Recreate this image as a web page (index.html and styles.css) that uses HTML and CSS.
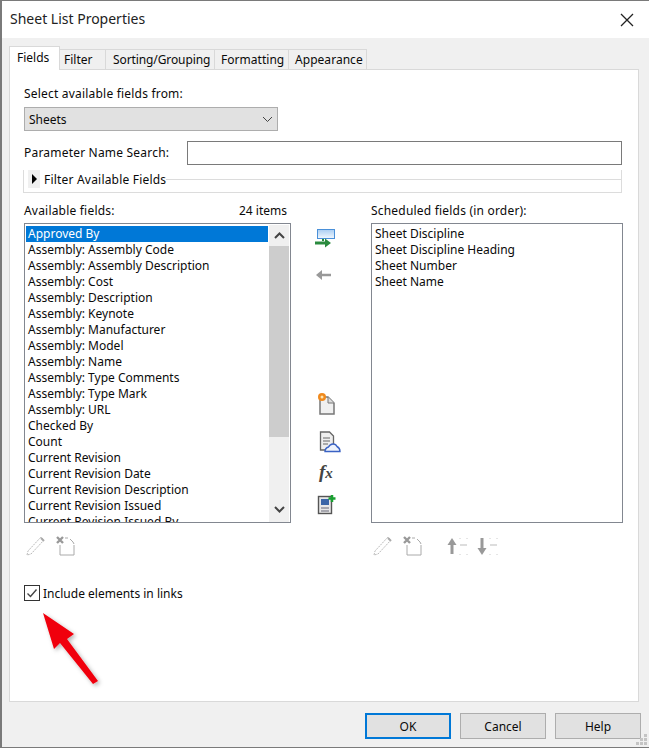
FILE: index.html
```html
<!DOCTYPE html>
<html lang="en">
<head>
<meta charset="utf-8">
<title>Sheet List Properties</title>
<link rel="stylesheet" href="styles.css">
</head>
<body>
<div class="window">
  <header class="titlebar">
    <span class="title">Sheet List Properties</span>
    <svg class="close" width="14" height="14" viewBox="0 0 14 14"><path d="M1 1l12 12M13 1L1 13" stroke="#222" stroke-width="1.3" fill="none"/></svg>
  </header>
  <div class="dialog">
    <nav class="tabs">
      <span class="tab active">Fields</span>
      <span class="tab tab-filter">Filter</span>
      <span class="tab tab-sort">Sorting/Grouping</span>
      <span class="tab tab-format">Formatting</span>
      <span class="tab tab-appear">Appearance</span>
    </nav>
    <main class="panel">
      <div class="label select-label">Select available fields from:</div>
      <div class="combo">
        <span>Sheets</span>
        <svg width="11" height="7" viewBox="0 0 11 7"><path d="M1 1l4.5 4.5L10 1" stroke="#444" fill="none"/></svg>
      </div>
      <div class="search-row">
        <span class="label">Parameter Name Search:</span>
        <div class="search-input"></div>
      </div>
      <div class="filter-group">
        <div class="filter-head">
          <span class="toggle"><svg width="7" height="10" viewBox="0 0 7 10"><path d="M1 0l5 5-5 5z" fill="#000"/></svg></span>
          <span class="label">Filter Available Fields</span>
          <span class="filter-line"></span>
        </div>
      </div>
      <div class="fields">
        <section class="col col-left">
          <div class="col-head"><span class="label">Available fields:</span><span>24 items</span></div>
          <div class="listbox">
            <div class="rows">
              <div class="row selected">Approved By</div>
              <div class="row">Assembly: Assembly Code</div>
              <div class="row">Assembly: Assembly Description</div>
              <div class="row">Assembly: Cost</div>
              <div class="row">Assembly: Description</div>
              <div class="row">Assembly: Keynote</div>
              <div class="row">Assembly: Manufacturer</div>
              <div class="row">Assembly: Model</div>
              <div class="row">Assembly: Name</div>
              <div class="row">Assembly: Type Comments</div>
              <div class="row">Assembly: Type Mark</div>
              <div class="row">Assembly: URL</div>
              <div class="row">Checked By</div>
              <div class="row">Count</div>
              <div class="row">Current Revision</div>
              <div class="row">Current Revision Date</div>
              <div class="row">Current Revision Description</div>
              <div class="row">Current Revision Issued</div>
              <div class="row">Current Revision Issued By</div>
            </div>
            <div class="scrollbar">
              <svg class="sb-arrow" width="11" height="7" viewBox="0 0 11 7"><path d="M1 6l4.5-4.5L10 6" stroke="#444" stroke-width="2" fill="none"/></svg>
              <div class="thumb"></div>
              <svg class="sb-arrow sb-down" width="11" height="7" viewBox="0 0 11 7"><path d="M1 1l4.5 4.5L10 1" stroke="#444" stroke-width="2" fill="none"/></svg>
            </div>
          </div>
          <div class="tools">
            <svg width="22" height="22" viewBox="0 0 22 22"><path d="M2 20l1-4L16 2l3 3L6 19z" fill="none" stroke="#bbb" stroke-dasharray="2 1"/><path d="M16 3l3 3" stroke="#aaa" stroke-width="2"/></svg>
            <svg width="22" height="22" viewBox="0 0 22 22"><path d="M10 3h3M15 4l3 3 1 2M19 10v10H5V10" fill="none" stroke="#aaa"/><path d="M2 2l6 6M8 2L2 8" stroke="#999" stroke-width="2.4"/></svg>
          </div>
        </section>
        <section class="mid">
          <svg class="mid-add" width="22" height="24" viewBox="0 0 22 24"><defs><linearGradient id="g" x1="0" y1="0" x2="0" y2="1"><stop offset="0" stop-color="#a9cdf2"/><stop offset="1" stop-color="#f2f8fe"/></linearGradient></defs><rect x="2.500" y="1.500" width="17" height="9" fill="url(#g)" stroke="#4a90d9"/><path d="M8 11v2" stroke="#2a8a3e" stroke-width="2"/><path d="M0 15h11" stroke="#2a8a3e" stroke-width="3"/><path d="M10 10.500l6 4.500-6 4.500z" fill="#2a8a3e"/></svg>
          <svg class="mid-remove" width="20" height="14" viewBox="0 0 20 14"><path d="M6 7h10" stroke="#999" stroke-width="2.500"/><path d="M7 2L1 7l6 5z" fill="#999"/></svg>
          <svg class="mid-new" width="20" height="24" viewBox="0 0 20 24"><path d="M3 5h8l6 6v11H3z" fill="#f0f0f0" stroke="#777" stroke-width="1.500"/><path d="M11 5v6h6" fill="#ddd" stroke="#777"/><circle cx="5" cy="5" r="4" fill="#f08a1e"/><circle cx="5" cy="5" r="1.500" fill="#ffe6b0"/></svg>
          <svg class="mid-cloud" width="22" height="22" viewBox="0 0 22 22"><path d="M1.500 1h9l4 4v14h-13z" fill="#eee" stroke="#666" stroke-width="1.300"/><path d="M4 7h7M4 10h7M4 13h5" stroke="#666"/><path d="M6 20.500c0-3 2-4 3.500-4.500 2-4 7-4 8.500-.500 2 1 3 3 3 5z" fill="#eef3fc" stroke="#3a62c4" stroke-width="1.400"/></svg>
          <span class="fx">f<i>x</i></span>
          <svg class="mid-calc" width="20" height="22" viewBox="0 0 20 22"><rect x="1.500" y="2.500" width="13" height="17" fill="#e8e8e8" stroke="#555" stroke-width="1.400"/><rect x="4" y="5" width="8" height="6" fill="#3c66a8"/><path d="M4 14h8M4 17h8" stroke="#667"/><path d="M15 1v7M11.500 4.500h7" stroke="#19a030" stroke-width="2.500"/></svg>
        </section>
        <section class="col col-right">
          <div class="col-head"><span class="label">Scheduled fields (in order):</span></div>
          <div class="listbox">
            <div class="rows">
              <div class="row">Sheet Discipline</div>
              <div class="row">Sheet Discipline Heading</div>
              <div class="row">Sheet Number</div>
              <div class="row">Sheet Name</div>
            </div>
          </div>
          <div class="tools">
            <svg width="22" height="22" viewBox="0 0 22 22"><path d="M2 20l1-4L16 2l3 3L6 19z" fill="none" stroke="#bbb" stroke-dasharray="2 1"/><path d="M16 3l3 3" stroke="#aaa" stroke-width="2"/></svg>
            <svg width="22" height="22" viewBox="0 0 22 22"><path d="M10 3h3M15 4l3 3 1 2M19 10v10H5V10" fill="none" stroke="#aaa"/><path d="M2 2l6 6M8 2L2 8" stroke="#999" stroke-width="2.400"/></svg>
            <svg class="tool-gap" width="22" height="22" viewBox="0 0 22 22"><path d="M6 19V9" stroke="#999" stroke-width="3"/><path d="M6 3L1.500 10h9z" fill="#999"/><path d="M14 10h7" stroke="#bbb"/><path d="M14 3v1M21 3v1M14 19v1M21 19v1" stroke="#ccc"/></svg>
            <svg width="22" height="22" viewBox="0 0 22 22"><path d="M6 3v11" stroke="#999" stroke-width="3"/><path d="M6 20L1.500 13h9z" fill="#999"/><path d="M14 10h7" stroke="#bbb"/><path d="M14 3v1M21 3v1M14 19v1M21 19v1" stroke="#ccc"/></svg>
          </div>
        </section>
      </div>
      <label class="include">
        <span class="checkbox"><svg width="14" height="14" viewBox="0 0 14 14"><path d="M2.500 7.500l3 3 6-7" stroke="#444" stroke-width="1.400" fill="none"/></svg></span>
        <span>Include elements in links</span>
      </label>
    </main>
    <footer class="buttons">
      <button class="btn default">OK</button>
      <button class="btn">Cancel</button>
      <button class="btn">Help</button>
    </footer>
  </div>
  <svg class="grip" width="12" height="12" viewBox="0 0 12 12"><path d="M8 0h3v3H8zM4 4h3v3H4zM8 4h3v3H8zM0 8h3v3H0zM4 8h3v3H4zM8 8h3v3H8z" fill="#c4c4c4"/></svg>
  <svg class="red-arrow" width="70" height="84" viewBox="0 0 70 84"><defs><filter id="s" x="-20%" y="-20%" width="150%" height="150%"><feDropShadow dx="2" dy="2" stdDeviation="2" flood-color="#000" flood-opacity=".3"/></filter></defs><path d="M6 3L37 24 30 29 61 71 56 74 23 33 17 39z" fill="#f0000f" filter="url(#s)"/></svg>
</div>
</body>
</html>
```
FILE: styles.css
```css
* { box-sizing: border-box; }
html, body { margin: 0; padding: 0; }
body {
  width: 649px;
  height: 748px;
  font-family: "Noto Sans", Tahoma, sans-serif;
  font-size: 12px;
  color: #0a0a0a;
  overflow: hidden;
}
.window {
  position: relative;
  width: 649px;
  height: 748px;
  background: #f0f0f0;
  border: 1px solid #7a7a7a;
  border-left-width: 2px;
  border-right: none;
  display: flex;
  flex-direction: column;
}
.titlebar {
  height: 37px;
  flex: none;
  background: #fff;
  display: flex;
  align-items: center;
  justify-content: space-between;
  padding: 0 15px 2px 8px;
}
.title { font-size: 14px; color: #222; }
.close { margin-top: 2px; }
.dialog {
  flex: 1;
  display: flex;
  flex-direction: column;
  padding: 8px 8px 0 7px;
  min-height: 0;
}
.tabs { display: flex; align-items: flex-end; height: 23px; flex: none; position: relative; z-index: 1; }
.tab {
  height: 20px;
  background: #f0f0f0;
  border: 1px solid #d9d9d9;
  border-left: none;
  border-bottom: none;
  display: flex;
  align-items: center;
  justify-content: flex-start;
  padding: 0 0 1px 6px;
  white-space: nowrap;
}
.tab.active {
  width: 51px;
  height: 24px;
  margin-bottom: -1px;
  background: #fff;
  border: 1px solid #d9d9d9;
  border-bottom: none;
  padding: 0 0 3px 7px;
}
.tab-filter { width: 46px; padding-left: 4px; }
.tab-sort { width: 109px; padding-left: 7px; letter-spacing: -.1px; }
.tab-format { width: 74px; letter-spacing: .03px; }
.tab-appear { width: 78px; letter-spacing: .04px; }
.panel {
  width: 630px;
  height: 633px;
  flex: none;
  background: #fff;
  border: 1px solid #d9d9d9;
  padding: 0 0 0 14px;
  display: flex;
  flex-direction: column;
}
.label { letter-spacing: .2px; }
.select-label { margin-top: 15px; line-height: 17px; }
.combo {
  width: 254px;
  height: 24px;
  margin-top: 5px;
  background: #e1e1e1;
  border: 1px solid #adadad;
  display: flex;
  align-items: center;
  justify-content: space-between;
  padding: 0 4px;
}
.search-row {
  display: flex;
  align-items: center;
  justify-content: space-between;
  width: 598px;
  margin-top: 10px;
}
.search-row .label { position: relative; top: -1px; }
.search-input { width: 435px; height: 24px; border: 1px solid #7a7a7a; background: #fff; }
.filter-group {
  width: 599px;
  height: 23px;
  margin-top: 5px;
  margin-left: -1px;
  border-left: 1px solid #dcdcdc;
  border-right: 1px solid #dcdcdc;
  border-bottom: 1px solid #dcdcdc;
}
.filter-head { display: flex; align-items: center; height: 18px; }
.toggle {
  width: 12px;
  height: 18px;
  margin-left: 4px;
  background: #f0f0f0;
  display: flex;
  align-items: center;
  justify-content: center;
}
.filter-head .label { margin-left: 4px; }
.filter-line { flex: 1; height: 1px; background: #dcdcdc; margin-right: -1px; }
.fields { display: flex; margin-top: 9px; }
.col { display: flex; flex-direction: column; }
.col-left { width: 267px; }
.col-right { width: 252px; }
.col-head { display: flex; justify-content: space-between; height: 21px; line-height: 17px; padding-right: 4px; }
.listbox {
  height: 300px;
  border: 1px solid #828790;
  background: #fff;
  display: flex;
  overflow: hidden;
  padding: 2px 1px 0;
}
.rows { flex: 1; min-width: 0; }
.row { height: 16px; line-height: 16px; padding-left: 2px; white-space: nowrap; }
.row.selected { background: #0078d7; color: #fff; }
.scrollbar {
  flex: none;
  width: 20px;
  margin: -1px 0 0 1px;
  background: #f0f0f0;
  display: flex;
  flex-direction: column;
  align-items: center;
}
.sb-arrow { flex: none; margin-top: 7px; }
.thumb { width: 100%; height: 191px; margin-top: 7px; background: #cdcdcd; flex: none; }
.sb-down { margin-top: 69px; }
.tools { display: flex; gap: 8px; margin-top: 12px; padding-left: 1px; }
.tool-gap { margin-left: 14px; }
.mid {
  width: 80px;
  flex: none;
  display: flex;
  flex-direction: column;
  align-items: flex-start;
  padding: 26px 0 0 24px;
}
.mid-remove { margin-top: 16px; }
.mid-new { margin-top: 110px; margin-left: 2px; }
.mid-cloud { margin-top: 15px; margin-left: 4px; }
.fx { margin-top: 7px; margin-left: 4px; font: italic 19px/24px "Liberation Serif", serif; font-weight: 600; color: #444; height: 24px; }
.fx i { font-size: 15px; }
.mid-calc { margin-top: 10px; margin-left: 2px; }
.include { display: flex; align-items: center; gap: 3px; margin-top: 28px; height: 16px; }
.checkbox {
  width: 16px;
  height: 16px;
  border: 1px solid #333;
  display: flex;
  align-items: center;
  justify-content: center;
  background: #fff;
}
.buttons {
  display: flex;
  justify-content: flex-end;
  gap: 9px;
  padding-top: 11px;
}
.btn {
  width: 86px;
  height: 26px;
  background: #e1e1e1;
  border: 1px solid #adadad;
  font: inherit;
  color: #0a0a0a;
  padding: 0;
}
.btn.default { border: 2px solid #0078d7; }
.grip { position: absolute; right: 1px; bottom: 1px; }
.red-arrow { position: absolute; left: 35px; top: 609px; }
```
